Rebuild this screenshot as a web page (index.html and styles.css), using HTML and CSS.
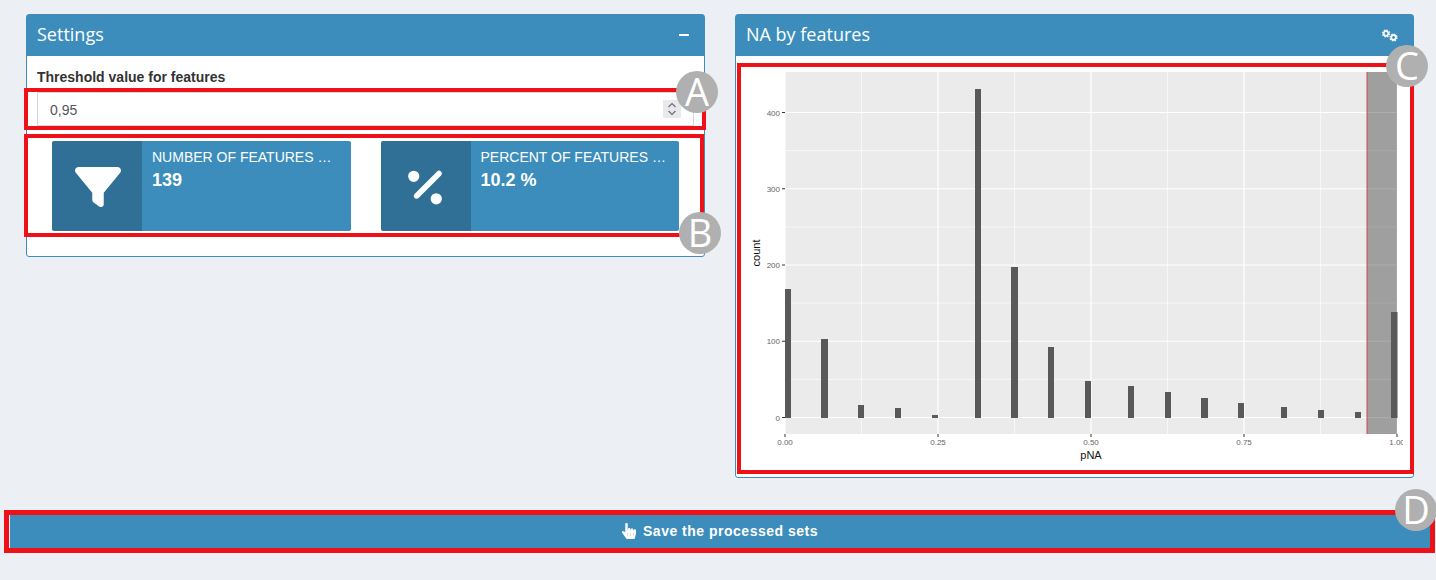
FILE: index.html
```html
<!DOCTYPE html>
<html lang="en">
<head>
<meta charset="utf-8">
<title>NA by features</title>
<link rel="stylesheet" href="styles.css">
</head>
<body>
<main class="page">
  <div class="row">
    <section class="box box-settings">
      <header class="box-header">
        <h3 class="box-title">Settings</h3>
        <span class="minus"></span>
      </header>
      <div class="box-body">
        <label class="field-label" for="threshold">Threshold value for features</label>
        <div class="input-wrap">
          <input id="threshold" class="field-input" type="text" value="0,95">
          <span class="spinner">
            <svg viewBox="0 0 18 18" width="18" height="18"><path d="M5.5 7 9 3.5 12.5 7M5.5 11 9 14.5 12.5 11" fill="none" stroke="#6d6d75" stroke-width="1.2"/></svg>
          </span>
        </div>
        <div class="info-row">
          <div class="info-box">
            <span class="info-icon">
              <svg class="icon-filter" viewBox="0 0 512 512"><path d="M3.9 54.9C10.5 40.9 24.5 32 40 32H472c15.5 0 29.5 8.9 36.1 22.9s4.6 30.5-5.2 42.5L320 320.9V448c0 12.1-6.8 23.2-17.7 28.6s-23.8 4.3-33.5-3l-64-48c-8.1-6-12.8-15.5-12.8-25.6V320.9L9 97.3C-.7 85.4-2.8 68.8 3.9 54.9z"/></svg>
            </span>
            <div class="info-content">
              <span class="info-text">NUMBER OF FEATURES BELOW THRESHOLD</span>
              <span class="info-number">139</span>
            </div>
          </div>
          <div class="info-box">
            <span class="info-icon">
              <svg class="icon-percent" viewBox="0 0 384 512"><path d="M374.6 118.6c12.5-12.5 12.5-32.8 0-45.3s-32.8-12.5-45.3 0l-256 256c-12.5 12.5-12.5 32.8 0 45.3s32.8 12.5 45.3 0l256-256zM128 128A64 64 0 1 0 0 128a64 64 0 1 0 128 0zM384 384a64 64 0 1 0 -128 0 64 64 0 1 0 128 0z"/></svg>
            </span>
            <div class="info-content">
              <span class="info-text">PERCENT OF FEATURES BELOW THRESHOLD</span>
              <span class="info-number">10.2 %</span>
            </div>
          </div>
        </div>
      </div>
    </section>

    <section class="box box-plot">
      <header class="box-header">
        <h3 class="box-title">NA by features</h3>
        <svg class="icon-gears" viewBox="0 0 16 13" width="16" height="13">
          <g fill="none" stroke="#fff">
            <circle cx="4" cy="4.5" r="2.3" stroke-width="1.7"/>
            <circle cx="4" cy="4.5" r="3.5" stroke-width="1.2" stroke-dasharray="1.6 1.15"/>
            <circle cx="11.5" cy="8.5" r="2.3" stroke-width="1.7"/>
            <circle cx="11.5" cy="8.5" r="3.5" stroke-width="1.2" stroke-dasharray="1.6 1.15"/>
          </g>
        </svg>
      </header>
      <div class="box-body">
        <svg class="plot" viewBox="746 66 657 401" width="657" height="401">
          <rect x="785" y="72" width="612" height="362" fill="#ebebeb"/>
          <g stroke="#fff" stroke-width="0.6">
            <path d="M861.5 72V434M1014.5 72V434M1167.5 72V434M1320.5 72V434M785 379.4H1397M785 303.1H1397M785 226.9H1397M785 150.6H1397"/>
          </g>
          <g stroke="#fff" stroke-width="1.2">
            <path d="M785 72V434M938 72V434M1091 72V434M1244 72V434M1397 72V434M785 417.5H1397M785 341.25H1397M785 265H1397M785 188.75H1397M785 112.5H1397"/>
          </g>
          <g fill="#595959">
            <rect x="785" y="289" width="6" height="129"/>
            <rect x="821" y="339" width="7" height="79"/>
            <rect x="858" y="405" width="6" height="13"/>
            <rect x="895" y="408" width="6" height="10"/>
            <rect x="932" y="415" width="6" height="3"/>
            <rect x="975" y="89" width="6" height="329"/>
            <rect x="1011" y="267" width="7" height="151"/>
            <rect x="1048" y="347" width="6" height="71"/>
            <rect x="1085" y="381" width="6" height="37"/>
            <rect x="1128" y="386" width="6" height="32"/>
            <rect x="1165" y="392" width="6" height="26"/>
            <rect x="1201" y="398" width="7" height="20"/>
            <rect x="1238" y="403" width="6" height="15"/>
            <rect x="1281" y="407" width="6" height="11"/>
            <rect x="1318" y="410" width="6" height="8"/>
            <rect x="1355" y="412" width="6" height="6"/>
          </g>
          <rect x="1367" y="72" width="30" height="362" fill="#000" fill-opacity="0.32"/>
          <rect x="1366.5" y="72" width="1" height="362" fill="#d4454a"/>
          <rect x="1391" y="312" width="6.5" height="106" fill="#595959"/>
          <g stroke="#333" stroke-width="1">
            <path d="M782 417.5H785M782 341.25H785M782 265H785M782 188.75H785M782 112.5H785M785 434V437M938 434V437M1091 434V437M1244 434V437M1397 434V437"/>
          </g>
          <g class="tick" text-anchor="end">
            <text x="780" y="420.5">0</text>
            <text x="780" y="344.2">100</text>
            <text x="780" y="268">200</text>
            <text x="780" y="191.7">300</text>
            <text x="780" y="115.5">400</text>
          </g>
          <g class="tick" text-anchor="middle">
            <text x="785" y="445">0.00</text>
            <text x="938" y="445">0.25</text>
            <text x="1091" y="445">0.50</text>
            <text x="1244" y="445">0.75</text>
            <text x="1397" y="445">1.00</text>
          </g>
          <text class="axis-title" x="1091" y="459" text-anchor="middle">pNA</text>
          <text class="axis-title" x="760" y="253" text-anchor="middle" transform="rotate(-90 760 253)">count</text>
        </svg>
      </div>
    </section>
  </div>

  <button class="save-btn" type="button">
    <svg class="icon-hand" viewBox="0 0 448 512"><path d="M448 240v96c0 3.084-.356 6.159-1.063 9.162l-32 136C410.686 499.23 394.562 512 376 512H168a40.004 40.004 0 0 1-32.35-16.473l-127.997-176c-12.993-17.866-9.043-42.883 8.822-55.876 17.867-12.994 42.884-9.043 55.877 8.823L104 315.992V40c0-22.091 17.908-40 40-40s40 17.909 40 40v200h8v-40c0-22.091 17.908-40 40-40s40 17.909 40 40v40h8v-24c0-22.091 17.908-40 40-40s40 17.909 40 40v24h8c0-22.091 17.908-40 40-40s40 17.909 40 40zm-256 80h-8v96h8v-96zm88 0h-8v96h8v-96zm88 0h-8v96h8v-96z"/></svg>
    <span>Save the processed sets</span>
  </button>
</main>

<div class="mark mark-a"></div>
<div class="mark mark-b"></div>
<div class="mark mark-c"></div>
<div class="mark mark-d"></div>
<span class="badge badge-a">A</span>
<span class="badge badge-b">B</span>
<span class="badge badge-c">C</span>
<span class="badge badge-d">D</span>
</body>
</html>
```
FILE: styles.css
```css
* { box-sizing: border-box; }

html, body {
  margin: 0;
  height: 580px;
  overflow: hidden;
}

body {
  position: relative;
  background: #ecf0f5;
  font-family: "Liberation Sans", Arial, sans-serif;
  font-size: 14px;
  color: #333;
}

.page {
  padding-top: 14px;
}

.row {
  display: flex;
  align-items: flex-start;
  gap: 30px;
  padding: 0 22px 0 26px;
}

.box {
  flex: 1 1 0;
  min-width: 0;
  background: #fff;
  border: 1px solid #3c8dbc;
  border-radius: 3px;
}

.box-header {
  display: flex;
  align-items: center;
  justify-content: space-between;
  height: 41px;
  padding: 0 15px 0 10px;
  background: #3c8dbc;
  color: #fff;
}

.box-title {
  margin: 0 0 4px;
  font-family: "Open Sans", sans-serif;
  font-size: 18px;
  font-weight: 400;
  line-height: 1;
}

.minus {
  width: 10px;
  height: 2px;
  margin-top: -2px;
  background: #fff;
}

.icon-gears {
  margin-right: 0;
  margin-top: -1px;
}

.box-body {
  padding: 10px;
}

.plot {
  display: block;
}

.tick {
  font-family: "Liberation Sans", Arial, sans-serif;
  font-size: 8px;
  fill: #666;
}

.axis-title {
  font-family: "Liberation Sans", Arial, sans-serif;
  font-size: 11px;
  fill: #111;
}

.field-label {
  display: block;
  height: 21px;
  margin-bottom: 5px;
  font-weight: 700;
  line-height: 23px;
}

.input-wrap {
  position: relative;
  height: 34px;
  margin-bottom: 15px;
}

.field-input {
  display: block;
  width: 100%;
  height: 34px;
  padding: 7px 12px 5px;
  border: 1px solid #d2d6de;
  border-radius: 0;
  background: #fff;
  color: #555;
  font-family: "Liberation Sans", Arial, sans-serif;
  font-size: 14px;
}

.spinner {
  position: absolute;
  top: 8px;
  right: 13px;
  width: 18px;
  height: 18px;
  background: #e9e9ed;
}

.spinner svg {
  display: block;
}

.info-row {
  display: flex;
  gap: 30px;
  padding: 0 15px;
  margin-bottom: 15px;
}

.info-box {
  flex: 1 1 0;
  min-width: 0;
  display: flex;
  height: 90px;
  border-radius: 2px;
  overflow: hidden;
  background: #3c8dbc;
  color: #fff;
}

.info-icon {
  flex: 0 0 90px;
  display: flex;
  align-items: center;
  justify-content: center;
  padding-top: 2px;
  background: rgba(0, 0, 0, 0.2);
}

.icon-filter {
  width: 46px;
  height: 46px;
  margin-left: 2px;
  fill: #fff;
}

.icon-percent {
  width: 34px;
  height: 45px;
  margin-right: 1px;
  fill: #fff;
}

.info-content {
  flex: 1 1 0;
  min-width: 0;
  padding: 6px 10px;
}

.info-text {
  display: block;
  font-size: 14px;
  line-height: 20px;
  white-space: nowrap;
  overflow: hidden;
  text-overflow: ellipsis;
}

.info-number {
  display: block;
  font-size: 18px;
  font-weight: 700;
  line-height: 26px;
}

.save-btn {
  display: flex;
  align-items: center;
  justify-content: center;
  gap: 7px;
  width: 1420px;
  height: 33px;
  margin: 37px 0 0 10px;
  padding: 0 0 2px;
  border: 0;
  background: #3c8dbc;
  color: #fff;
  font-family: "Liberation Sans", Arial, sans-serif;
  font-size: 14px;
  font-weight: 700;
  letter-spacing: 0.5px;
}

.icon-hand {
  width: 14px;
  height: 16px;
  fill: #fff;
}

.mark {
  position: absolute;
  border: 4px solid #ee1118;
  pointer-events: none;
}

.mark-a { left: 24px; top: 88px; width: 682px; height: 42px; }
.mark-b { left: 24px; top: 134px; width: 680px; height: 103px; }
.mark-c { left: 737px; top: 63px; width: 677px; height: 411px; }
.mark-d { left: 4px; top: 510px; width: 1431px; height: 43px; border-width: 5px; }

.badge {
  position: absolute;
  display: flex;
  align-items: center;
  justify-content: center;
  width: 42px;
  height: 42px;
  padding-bottom: 2px;
  border-radius: 50%;
  background: #b0b0b0;
  color: #fff;
  font-family: "Open Sans", sans-serif;
  font-size: 38px;
  line-height: 1;
}

.badge-a { left: 676px; top: 71px; }
.badge-b { left: 679px; top: 212px; }
.badge-c { left: 1386px; top: 45px; }
.badge-d { left: 1395px; top: 489px; }
```
